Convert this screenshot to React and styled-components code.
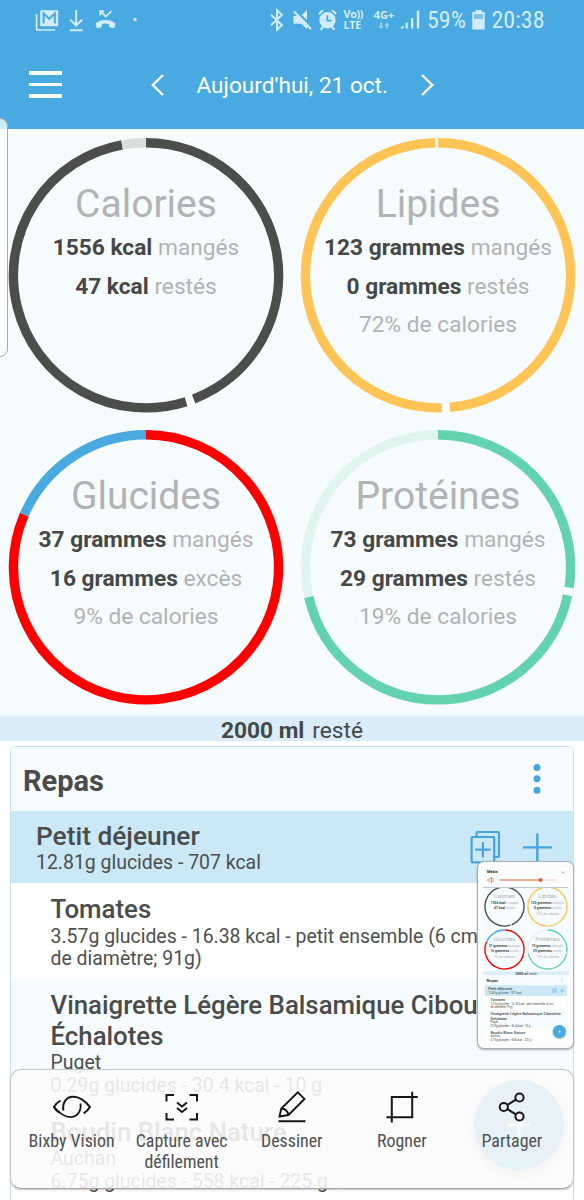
import styled, { createGlobalStyle } from 'styled-components';

const GlobalStyle = createGlobalStyle`
    * {
        box-sizing: border-box;
    }
    body {
        margin: 0;
        font-family: Roboto, 'Liberation Sans', sans-serif;
        background: #fff;
        overflow: hidden;
    }
`;

const Screen = styled.div`
    position: relative;
    width: 584px;
    height: 1200px;
    overflow: hidden;
    background: #fff;
`;

/* header */

const Header = styled.header`
    height: 129px;
    background: #48aae0;
    color: #fff;
`;

const StatusBar = styled.div`
    display: flex;
    align-items: center;
    height: 39px;
    padding-left: 35px;
    color: #d3ecf9;
`;

const StatusIcon = styled.svg`
    flex: none;
    width: ${({ $w }) => $w}px;
    height: 24px;
    margin-left: ${({ $gap = 0 }) => $gap}px;
    overflow: visible;
`;

const StatusText = styled.span`
    flex: none;
    width: ${({ $w }) => $w}px;
    margin-left: ${({ $gap = 0 }) => $gap}px;
    font-family: 'Roboto Condensed', Roboto, sans-serif;
    font-size: 24px;
    line-height: 24px;
    white-space: nowrap;
`;

const Network = styled.span`
    flex: none;
    display: flex;
    flex-direction: column;
    align-items: ${({ $align = 'flex-start' }) => $align};
    width: ${({ $w }) => $w}px;
    margin-left: ${({ $gap = 0 }) => $gap}px;
    font-family: 'Open Sans', sans-serif;
    font-size: ${({ $size }) => $size}px;
    font-weight: 700;
    line-height: 11px;
    letter-spacing: ${({ $tight = 0 }) => $tight}px;
    white-space: nowrap;
`;

const NavBar = styled.nav`
    display: flex;
    align-items: center;
    height: 90px;
    padding: 1px 0 0 29px;
`;

const Burger = styled.div`
    display: flex;
    flex-direction: column;
    gap: 8px;
    width: 33px;
    margin-right: 89px;
`;

const BurgerLine = styled.span`
    height: 3.4px;
    background: #fff;
`;

const Chevron = styled.svg`
    flex: none;
    width: 13px;
    height: 22px;
    fill: none;
    stroke: #fff;
    stroke-width: 2.4;
`;

const DateLabel = styled.span`
    width: 191px;
    margin: 2px 33px 0 32.5px;
    font-size: 22.6px;
    line-height: 30px;
    white-space: nowrap;
`;

/* diary */

const DiaryBox = styled.main`
    position: relative;
    width: 584px;
    height: 1071px;
    overflow: hidden;
    background: #fff;
`;

const Rings = styled.section`
    display: grid;
    grid-template-columns: 292px 292px;
    grid-auto-rows: 292px;
    place-items: center;
    height: 586px;
    background: #f6fbfe;
`;

const Ring = styled.div`
    position: relative;
    width: 274px;
    height: 274px;
    padding-top: 40.5px;
    text-align: center;
`;

const RingDrawing = styled.svg`
    position: absolute;
    inset: 0;
    width: 274px;
    height: 274px;
    overflow: visible;
    fill: none;
`;

const RingTitle = styled.h2`
    margin: 0 0 0.5px;
    font-size: 39px;
    font-weight: 400;
    line-height: 50px;
    color: #b1b3b4;
`;

const RingLine = styled.p`
    margin: 0;
    font-size: 22.7px;
    line-height: 38.5px;
    color: #b1b3b4;
    white-space: nowrap;
`;

const Amount = styled.b`
    font-weight: 700;
    color: #464847;
`;

const WaterBar = styled.div`
    display: flex;
    justify-content: center;
    gap: 8px;
    height: 26px;
    padding-top: 2px;
    border-top: 1px solid #f0f7fb;
    background: #d9ecf8;
    font-size: 22.7px;
    line-height: 26px;
    color: #464847;
`;

const MealCard = styled.section`
    margin: 5px 10px 0;
    border: 1px solid #c5e4f3;
    border-radius: 6px 6px 0 0;
    overflow: hidden;
`;

const CardHeader = styled.div`
    display: flex;
    align-items: center;
    justify-content: space-between;
    height: 64px;
    padding: 3px 32px 0 12px;
    background: #f6fbfe;
`;

const CardTitle = styled.h1`
    margin: 0;
    font-size: 29px;
    font-weight: 700;
    line-height: 34px;
    color: #4a4c4b;
`;

const Dots = styled.svg`
    width: 8px;
    height: 32px;
    margin-bottom: 4px;
    fill: #48a4dc;
`;

const MealHeader = styled.div`
    display: flex;
    justify-content: space-between;
    height: 72px;
    padding: 10px 21px 0 25px;
    background: #cbe8f6;
`;

const MealIcons = styled.svg`
    width: 82px;
    height: 34px;
    margin-top: 9px;
    fill: none;
    stroke: #48a4dc;
`;

const MealTitle = styled.h3`
    margin: 0;
    font-size: ${({ $size = 25.8 }) => $size}px;
    font-weight: 500;
    line-height: 30.6px;
    color: #4a4c4b;
    white-space: pre-line;
`;

const MealText = styled.p`
    max-width: 440px;
    margin: 0;
    font-size: 19.45px;
    line-height: 22.7px;
    color: #4d4f4e;
`;

const MealItem = styled.div`
    padding: 11px 0 9px 39.5px;
    background: ${({ $tinted }) => ($tinted ? '#f6fbfe' : '#fff')};

    ${MealTitle} {
        margin-bottom: 1px;
    }

    ${MealTitle} ~ ${MealText}:last-child {
        margin-bottom: -1px;
    }
`;

const AddButton = styled.div`
    position: absolute;
    left: 474px;
    top: 951px;
    display: grid;
    place-items: center;
    width: 90px;
    height: 90px;
    border-radius: 50%;
    background: #48aae0;
    box-shadow: 0 5px 12px rgba(0, 0, 0, 0.3);
`;

/* overlays left by the system */

const EdgePanel = styled.div`
    position: absolute;
    left: -2px;
    top: 118px;
    width: 10px;
    height: 239px;
    border: 1px solid #a3a9ad;
    border-radius: 0 8px 8px 0;
    background: rgba(252, 253, 254, 0.75);
`;

const Thumbnail = styled.div`
    position: absolute;
    left: 477px;
    top: 861px;
    width: 97px;
    height: 188px;
    padding: 0 5px;
    border: 1px solid #a9adb0;
    border-radius: 7px;
    background: #fbfcfd;
    box-shadow: 0 1px 2px rgba(0, 0, 0, 0.3);
    overflow: hidden;
`;

const VolumePanel = styled.div`
    position: relative;
    z-index: 1;
    height: 26px;
    padding: 6px 3px 0 4px;
    border-bottom: 1px solid #c3cacd;
`;

const VolumeTitle = styled.div`
    display: flex;
    justify-content: space-between;
    align-items: center;
    height: 8px;
    font-size: 3.8px;
    font-weight: 700;
    line-height: 8px;
    color: #222;
`;

const VolumeSlider = styled.svg`
    display: block;
    width: 70px;
    height: 8px;
    fill: none;
    stroke: #d8703f;
`;

const MiniViewport = styled.div`
    width: 86px;
    height: 155px;
    overflow: hidden;
`;

const MiniPage = styled.div`
    width: 584px;
    height: 1071px;
    margin-top: -2.6px;
    transform: scale(0.1472);
    transform-origin: 0 0;
`;

const Toolbar = styled.div`
    position: absolute;
    left: 10px;
    top: 1069px;
    display: flex;
    width: 564px;
    height: 120px;
    padding: 20.5px 6px 0 5.5px;
    border: 1px solid #c3c8ca;
    border-bottom-color: #a5a8aa;
    border-radius: 11px;
    background: rgba(250, 250, 250, 0.885);
    box-shadow: 0 1px 2px rgba(0, 0, 0, 0.22);
`;

const Tool = styled.div`
    display: flex;
    flex-direction: column;
    align-items: center;
    gap: 7px;
    width: 110.4px;
`;

const ToolIcon = styled.svg`
    width: 38px;
    height: 32px;
    fill: none;
    stroke: #161616;
    stroke-width: 2;
`;

const ToolLabel = styled.span`
    font-family: 'Roboto Condensed', Roboto, sans-serif;
    font-size: 17.9px;
    line-height: 21px;
    text-align: center;
    color: #505151;
`;

const rings = [
    {
        title: 'Calories',
        arcs: [
            [0, 159, '#4c4e4b'],
            [159, 162.4, '#fff'],
            [162.4, 349.6, '#4c4e4b'],
            [349.6, 360, '#dcdddd'],
        ],
        lines: [['1556 kcal', 'mangés'], ['47 kcal', 'restés']],
    },
    {
        title: 'Lipides',
        arcs: [
            [0, 175, '#fec455'],
            [175, 178.3, '#fff'],
            [178.3, 358.8, '#fec455'],
            [358.8, 360, '#fff'],
        ],
        lines: [['123 grammes', 'mangés'], ['0 grammes', 'restés'], ['', '72% de calories']],
    },
    {
        title: 'Glucides',
        arcs: [
            [0, 293.4, '#fe0000'],
            [293.4, 360, '#48aae0'],
        ],
        lines: [['37 grammes', 'mangés'], ['16 grammes', 'excès'], ['', '9% de calories']],
    },
    {
        title: 'Protéines',
        arcs: [
            [0, 98.9, '#62d3ae'],
            [98.9, 102.2, '#fff'],
            [102.2, 257.1, '#62d3ae'],
            [257.1, 360, '#e0f5ee'],
        ],
        lines: [['73 grammes', 'mangés'], ['29 grammes', 'restés'], ['', '19% de calories']],
    },
];

const items = [
    {
        title: 'Tomates',
        lines: ['3.57g glucides - 16.38 kcal - petit ensemble (6 cm de diamètre; 91g)'],
    },
    {
        title: 'Vinaigrette Légère Balsamique Ciboulette\nÉchalotes',
        lines: ['Puget', '0.29g glucides - 30.4 kcal - 10 g'],
    },
    {
        title: 'Boudin Blanc Nature',
        lines: ['Auchan', '6.75g glucides - 558 kcal - 225 g'],
    },
];

const point = deg => {
    const a = (deg - 90) * Math.PI / 180;
    return `${137 + 132.6 * Math.cos(a)} ${137.3 + 132.6 * Math.sin(a)}`;
};

const arcPath = (from, to) =>
    `M${point(from)}A132.6 132.6 0 ${to - from > 180 ? 1 : 0} 1 ${point(to)}`;

const Diary = () => (
    <DiaryBox>
        <Rings>
            {rings.map(ring => (
                <Ring key={ring.title}>
                    <RingDrawing viewBox="0 0 274 274">
                        {ring.arcs.map(([from, to, color]) => (
                            <path key={from} d={arcPath(from, to)} stroke={color} strokeWidth="9.4" />
                        ))}
                    </RingDrawing>
                    <RingTitle>{ring.title}</RingTitle>
                    {ring.lines.map(([amount, text]) => (
                        <RingLine key={text}>
                            {amount && <Amount>{amount} </Amount>}
                            {text}
                        </RingLine>
                    ))}
                </Ring>
            ))}
        </Rings>
        <WaterBar>
            <Amount>2000 ml</Amount>
            <span>resté</span>
        </WaterBar>
        <MealCard>
            <CardHeader>
                <CardTitle>Repas</CardTitle>
                <Dots viewBox="0 0 8 32">
                    <circle cx="4" cy="4.5" r="3.5" />
                    <circle cx="4" cy="15.8" r="3.5" />
                    <circle cx="4" cy="27.2" r="3.5" />
                </Dots>
            </CardHeader>
            <MealHeader>
                <div>
                    <MealTitle $size={26.3}>Petit déjeuner</MealTitle>
                    <MealText>12.81g glucides - 707 kcal</MealText>
                </div>
                <MealIcons viewBox="0 0 82 34">
                    <g strokeWidth="2.2">
                        <rect x="1.6" y="7" width="22.6" height="25.4" rx="1" />
                        <path d="M6.6 7V3.2q0-1.2 1.2-1.2h20q1.2 0 1.2 1.2v22.6q0 1.2-1.2 1.2h-3.6M5.2 19.7h15.4M12.9 12v15.4" />
                    </g>
                    <path d="M53 17.4h29M67.3 3.4v29" strokeWidth="2.4" />
                </MealIcons>
            </MealHeader>
            {items.map((item, i) => (
                <MealItem key={item.title} $tinted={i % 2 === 1}>
                    <MealTitle>{item.title}</MealTitle>
                    {item.lines.map(line => <MealText key={line}>{line}</MealText>)}
                </MealItem>
            ))}
        </MealCard>
        <AddButton>
            <svg width="22" height="22" viewBox="0 0 22 22" stroke="#fff" strokeWidth="3">
                <path d="M0 11h22M11 0v22" />
            </svg>
        </AddButton>
    </DiaryBox>
);

const Status = () => (
    <StatusBar>
        <StatusIcon $w={24} viewBox="0 0 24 24" fill="none" stroke="currentColor">
            <path d="M1.6 6v15.2q0 .8.8.8H20" strokeWidth="1.7" />
            <rect x="5.2" y="2.2" width="18" height="16" rx="1" fill="currentColor" stroke="none" />
            <path d="M8.6 15.6V5.6l5.6 5.2 5.6-5.2v10" stroke="#48aae0" strokeWidth="2" />
        </StatusIcon>
        <StatusIcon $w={14} $gap={10} viewBox="0 0 14 24" fill="none" stroke="currentColor" strokeWidth="2">
            <path d="M7.2 2v15.4M1.2 11.6l6 5.9 6-5.9M1 22.2h12.6" />
        </StatusIcon>
        <StatusIcon $w={21} $gap={12} viewBox="0 0 21 24" fill="none" stroke="currentColor">
            <path d="M5.4 3.2l5.4 5.4 5.6-5.4M5.2 7.6V3.2h4" strokeWidth="1.7" />
            <path
                fill="currentColor"
                stroke="none"
                d="M10.5 12c3.8 0 7.1 1.2 9.3 3.1.6.5.7 1.2.4 1.9l-.8 2.5c-.3.7-.9.9-1.6.6l-3-.9c-.6-.3-.8-.7-.8-1.3v-2c-2.2-.7-4.800-.7-7 0v2c0 .6-.2 1-.8 1.300l-3 .9c-.7.300-1.300.1-1.600-.6l-.8-2.500c-.3-.7-.2-1.400.4-1.900 2.200-1.900 5.500-3.100 9.300-3.100z"
            />
        </StatusIcon>
        <StatusIcon $w={4} $gap={16.5} viewBox="0 0 4 24" fill="currentColor">
            <circle cx="2" cy="11.5" r="1.7" />
        </StatusIcon>
        <StatusIcon $w={14} $gap={133.5} viewBox="0 0 14 24" fill="none" stroke="currentColor" strokeWidth="2">
            <path d="M1 6.7l11 10.5-5 4.5V2.3L12 6.8 1 17.3" />
        </StatusIcon>
        <StatusIcon $w={18} $gap={8.5} viewBox="0 0 18 24" fill="currentColor">
            <path d="M14 2v19L8.2 15.8H.5V8h7.2z" />
            <path d="M2.5 2l17 17.5" stroke="#48aae0" strokeWidth="2.2" />
            <path d="M1 3.6l17 17.6" stroke="currentColor" strokeWidth="2.2" />
        </StatusIcon>
        <StatusIcon $w={19} $gap={7.5} viewBox="0 0 19 24" fill="currentColor">
            <circle cx="9.5" cy="12.3" r="8.2" />
            <path d="M.8 5.9l4-3.6M18.2 5.9l-4-3.6M2.5 21.8l2.8-3M16.5 21.8l-2.8-3" stroke="currentColor" strokeWidth="2" />
            <path d="M9.3 7.3v5.4h4.4" fill="none" stroke="#48aae0" strokeWidth="1.8" />
        </StatusIcon>
        <Network $w={20} $gap={6.5} $size={10.7} $tight={-0.3}>
            <span>Vo))</span>
            <span>LTE</span>
        </Network>
        <Network $w={21} $gap={10} $size={11} $align="center">
            <span>4G+</span>
            <svg width="12" height="11" viewBox="0 0 12 11" fill="currentColor" opacity="0.6">
                <path d="M2 2.5h2V6h1.8L3 9 .2 6H2zM8 8.5h2v-3h1.8l-2.8-3-2.800 3H8z" />
            </svg>
        </Network>
        <StatusIcon $w={20} $gap={5} viewBox="0 0 20 24" fill="currentColor">
            <path d="M0 20.5l3.500-3.300v3.300zM5.500 14.700h2.300v5.800H5.500zM11 10h2.300v10.500H11zM16.800 2.500h2.500v18h-2.500z" />
        </StatusIcon>
        <StatusText $w={38} $gap={7.5}>59%</StatusText>
        <StatusIcon $w={13} $gap={6.5} viewBox="0 0 13 24" fill="currentColor">
            <path d="M3.5 2h6v2h3.2v17.5H.3V4h3.2z" />
            <path d="M2 6h9v5H2z" fill="#7cc2e9" />
        </StatusIcon>
        <StatusText $w={54} $gap={7}>20:38</StatusText>
    </StatusBar>
);

const App = () => (
    <Screen>
        <GlobalStyle />
        <Header>
            <Status />
            <NavBar>
                <Burger>
                    <BurgerLine />
                    <BurgerLine />
                    <BurgerLine />
                </Burger>
                <Chevron viewBox="0 0 13 22"><path d="M12 1L1.800 11 12 21" /></Chevron>
                <DateLabel>Aujourd'hui, 21 oct.</DateLabel>
                <Chevron viewBox="0 0 13 22"><path d="M1 1l10.200 10L1 21" /></Chevron>
            </NavBar>
        </Header>
        <Diary />
        <EdgePanel />
        <Thumbnail>
            <VolumePanel>
                <VolumeTitle>
                    <span>Média</span>
                    <svg width="4" height="3" viewBox="0 0 4 3" fill="none" stroke="#777" strokeWidth=".6">
                        <path d="M.3.5L2 2.300 3.700.5" />
                    </svg>
                </VolumeTitle>
                <VolumeSlider viewBox="0 0 70 8">
                    <path d="M1 3h1.500L4.500 1v6l-2-2H1zM6 2v4" strokeWidth=".7" />
                    <path d="M12.500 4H69" strokeWidth=".8" opacity=".4" />
                    <path d="M12.500 4H53" strokeWidth=".9" />
                    <circle cx="53.5" cy="4" r="2.1" fill="#e0602f" stroke="none" />
                </VolumeSlider>
            </VolumePanel>
            <MiniViewport>
                <MiniPage>
                    <Diary />
                </MiniPage>
            </MiniViewport>
        </Thumbnail>
        <Toolbar>
            <Tool>
                <ToolIcon viewBox="0 0 38 32">
                    <path d="M7.500 9.500C4.500 11.300 2.300 13.600.9 16c1.200 2.200 3.300 4.200 5.600 5.700M10.400 19.500c-1.200-6.300 1.800-13 8.600-13.700 7-.6 13.400 4.300 17.900 10.100-1.300 2.300-3.400 4.500-6.200 6.500" strokeWidth="2" />
                    <path d="M27.500 12.500c1.100 6.500-2.300 12.500-8.500 13.500-6.600.5-13-4-17.500-9.500" strokeWidth="1.700" />
                </ToolIcon>
                <ToolLabel>Bixby Vision</ToolLabel>
            </Tool>
            <Tool>
                <ToolIcon viewBox="0 0 38 32">
                    <path d="M3.500 10.500V4H11M26.500 4H34v6.500M34 22v6.500h-7.500M11 28.500H3.500V22" />
                    <path d="M14 11.500l5 4 5-4M14 17l5 4 5-4" strokeWidth="1.800" />
                </ToolIcon>
                <ToolLabel>Capture avec défilement</ToolLabel>
            </Tool>
            <Tool>
                <ToolIcon viewBox="0 0 38 32">
                    <path d="M6.500 25.500l1.800-8L24.800 1.400l6.700 6.500L15.500 24zM8.300 17.500c3.500.2 6.300 2.500 7.200 6.500M5.500 30.200h27" strokeWidth="1.900" />
                </ToolIcon>
                <ToolLabel>Dessiner</ToolLabel>
            </Tool>
            <Tool>
                <ToolIcon viewBox="0 0 38 32">
                    <path d="M3.500 26.200h25.700V.8M34.800 6H8.800v25.600" />
                </ToolIcon>
                <ToolLabel>Rogner</ToolLabel>
            </Tool>
            <Tool>
                <ToolIcon viewBox="0 0 38 32">
                    <circle cx="10.8" cy="16" r="4.1" />
                    <circle cx="26.5" cy="6.5" r="4.1" />
                    <circle cx="26.5" cy="25.500" r="4.1" />
                    <path d="M14.400 13.900l8.500-5.200M14.400 18.100l8.500 5.200" />
                </ToolIcon>
                <ToolLabel>Partager</ToolLabel>
            </Tool>
        </Toolbar>
    </Screen>
);

export default App;
